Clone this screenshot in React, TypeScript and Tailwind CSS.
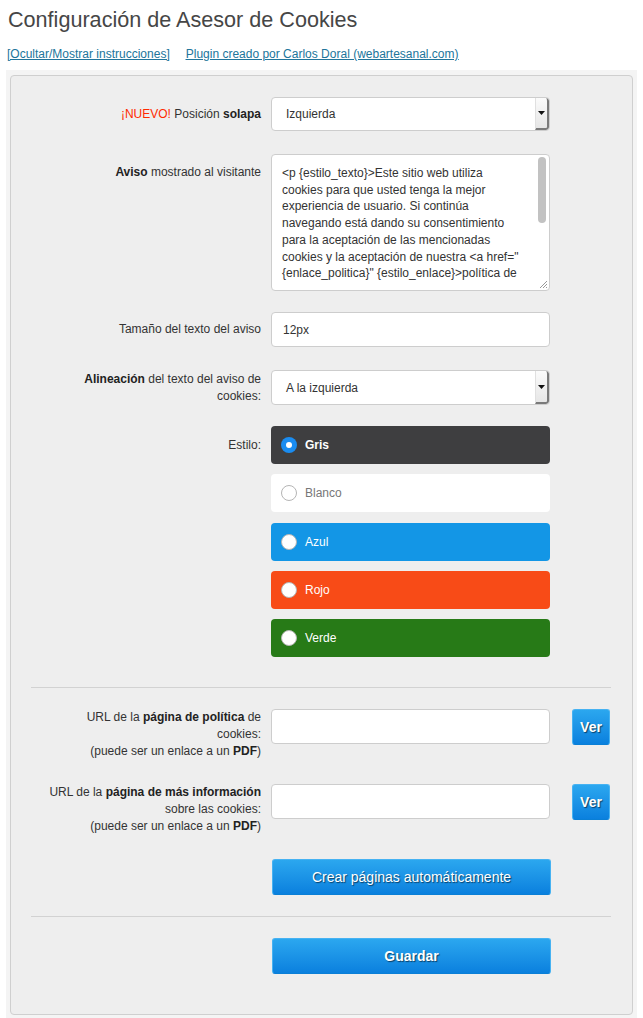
import type { ReactNode } from "react";

const LINES = [
  "<p {estilo_texto}>Este sitio web utiliza",
  "cookies para que usted tenga la mejor",
  "experiencia de usuario. Si continúa",
  "navegando está dando su consentimiento",
  "para la aceptación de las mencionadas",
  'cookies y la aceptación de nuestra <a href="',
  '{enlace_politica}" {estilo_enlace}>política de',
];

const STYLES = [
  { name: "Gris", bg: "bg-[#3e3e40]", text: "text-white font-bold", checked: true },
  { name: "Blanco", bg: "bg-white", text: "text-[#777]", checked: false },
  { name: "Azul", bg: "bg-[#1396e6]", text: "text-white", checked: false },
  { name: "Rojo", bg: "bg-[#f84b17]", text: "text-white", checked: false },
  { name: "Verde", bg: "bg-[#277a17]", text: "text-white", checked: false },
];

function Select({ value }: { value: string }) {
  return (
    <div className="flex h-full w-[279px] rounded-[4px] border border-[#cdcdcd] bg-white overflow-hidden">
      <span className="flex-1 flex items-center pl-[14px] text-[12px] text-[#333]">{value}</span>
      <span className="w-[14px] flex items-center justify-center bg-gradient-to-b from-[#fbfbfb] to-[#e6e6e6] border-l border-[#e0e0e0] border-r-2 border-r-[#7a7a7a] border-b-2 border-b-[#7a7a7a] rounded-r-[3px]">
        <svg width="7" height="4" viewBox="0 0 7 4">
          <path d="M0 0h7L3.5 4z" fill="#111" />
        </svg>
      </span>
    </div>
  );
}

function BlueButton({ children, className }: { children: ReactNode; className: string }) {
  return (
    <button
      type="button"
      className={`rounded-[3px] border border-[#46b2f2] border-b-[#0a7fd6] bg-gradient-to-b from-[#2ba7ef] to-[#0a80de] text-white [text-shadow:1px_1px_1px_rgba(0,0,0,0.55)] ${className}`}
    >
      {children}
    </button>
  );
}

function Row({ label, children, align = "center", className = "" }: { label: ReactNode; children: ReactNode; align?: "center" | "top"; className?: string }) {
  return (
    <div className={`flex ${align === "center" ? "items-center" : "items-start"} ${className}`}>
      <div className={`w-[230px] text-right text-[12px] leading-[17px] text-[#333] ${align === "top" ? "pt-[10px]" : ""}`}>
        {label}
      </div>
      <div className="ml-[10px] h-full flex">{children}</div>
    </div>
  );
}

export default function App() {
  return (
    <div className="min-h-screen bg-white font-['Liberation_Sans',Arial,sans-serif]">
      <h2 className="pl-[8px] pt-[6px] text-[21.6px] leading-[28px] text-[#464646]">
        Configuración de Asesor de Cookies
      </h2>
      <div className="pl-[7px] mt-[12px] flex gap-[16px] text-[12px] leading-[16px] text-[#21759b] underline">
        <a href="#">[Ocultar/Mostrar instrucciones]</a>
        <a href="#">Plugin creado por Carlos Doral (webartesanal.com)</a>
      </div>

      <div className="mt-[8px] mx-[6px] bg-[#f4f4f4] px-[4px] pt-[5px] pb-[3px]">
        <div className="rounded-[4px] border border-[#cfcfcf] bg-[#eeeeee] pl-[20px] pr-[21px] pt-[21px] pb-[40px]">
          <Row className="h-[34px]" label={<><span className="text-[#ff2a00]">¡NUEVO!</span> Posición <b className="text-[#222]">solapa</b></>}>
            <Select value="Izquierda" />
          </Row>

          <Row className="mt-[23px]" align="top" label={<><b className="text-[#222]">Aviso</b> mostrado al visitante</>}>
            <div className="relative w-[279px] h-[137px] rounded-[4px] border border-[#cdcdcd] bg-white overflow-hidden pl-[10px] pt-[10px] text-[12px] leading-[16.7px] text-[#333]">
              {LINES.map((l, i) => (
                <div key={i} className="whitespace-pre">{l}</div>
              ))}
              <span className="absolute right-[3px] top-[2px] w-[8px] h-[66px] rounded-full bg-[#c2c2c2]" />
              <svg className="absolute right-[1px] bottom-[1px]" width="10" height="10" viewBox="0 0 10 10">
                <path d="M9 2L2 9M9 5L5 9M9 8L8 9" stroke="#999" strokeWidth="1" />
              </svg>
            </div>
          </Row>

          <Row className="mt-[21px] h-[35px]" label="Tamaño del texto del aviso">
            <div className="w-[279px] h-full rounded-[4px] border border-[#cdcdcd] bg-white flex items-center pl-[11px] text-[12px] text-[#333]">
              12px
            </div>
          </Row>

          <Row className="mt-[23px] h-[35px]" label={<><b className="text-[#222]">Alineación</b> del texto del aviso de<br />cookies:</>}>
            <Select value="A la izquierda" />
          </Row>

          <div className="mt-[21px] flex items-start">
            <div className="w-[230px] h-[38px] flex items-center justify-end text-[12px] text-[#333]">Estilo:</div>
            <div className="ml-[10px] flex flex-col gap-[10.25px]">
              {STYLES.map((s) => (
                <div key={s.name} className={`w-[279px] h-[38px] rounded-[4px] flex items-center pl-[10px] ${s.bg}`}>
                  {s.checked ? (
                    <span className="w-[16px] h-[16px] rounded-full bg-[#1a8cf0] flex items-center justify-center">
                      <span className="w-[6px] h-[6px] rounded-full bg-white" />
                    </span>
                  ) : (
                    <span className="w-[16px] h-[16px] rounded-full bg-white border border-[#b5b5b5]" />
                  )}
                  <span className={`ml-[8px] text-[12px] ${s.text}`}>{s.name}</span>
                </div>
              ))}
            </div>
          </div>

          <hr className="mt-[30px] border-0 border-t border-[#d2d2d2]" />

          <div className="mt-[21px] flex items-start">
            <div className="w-[230px] text-right text-[12px] leading-[17px] text-[#333]">
              URL de la <b className="text-[#222]">página de política</b> de<br />cookies:<br />(puede ser un enlace a un <b className="text-[#222]">PDF</b>)
            </div>
            <div className="ml-[10px] w-[279px] h-[35px] rounded-[4px] border border-[#cdcdcd] bg-white" />
            <BlueButton className="ml-[22px] w-[38px] h-[36px] text-[14px] font-bold">Ver</BlueButton>
          </div>

          <div className="mt-[24px] flex items-start">
            <div className="w-[230px] text-right text-[12px] leading-[17px] text-[#333]">
              URL de la <b className="text-[#222]">página de más información</b><br />sobre las cookies:<br />(puede ser un enlace a un <b className="text-[#222]">PDF</b>)
            </div>
            <div className="ml-[10px] w-[279px] h-[35px] rounded-[4px] border border-[#cdcdcd] bg-white" />
            <BlueButton className="ml-[22px] w-[38px] h-[36px] text-[14px] font-bold">Ver</BlueButton>
          </div>

          <div className="mt-[24px] pl-[241px]">
            <BlueButton className="w-[279px] h-[36px] text-[14px]">Crear páginas automáticamente</BlueButton>
          </div>

          <hr className="mt-[21px] border-0 border-t border-[#d2d2d2]" />

          <div className="mt-[21px] pl-[241px]">
            <BlueButton className="w-[279px] h-[36px] text-[14px] font-bold">Guardar</BlueButton>
          </div>
        </div>
      </div>
    </div>
  );
}
